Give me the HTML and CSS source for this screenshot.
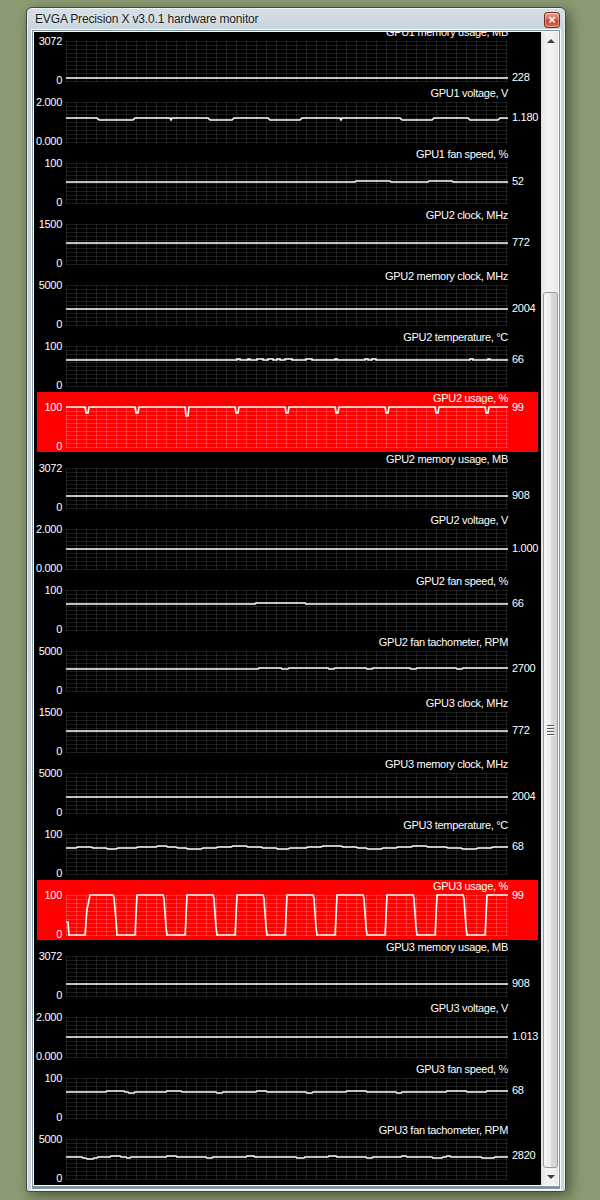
FILE: index.html
```html
<!DOCTYPE html>
<html>
<head>
<meta charset="utf-8">
<title>EVGA Precision X v3.0.1 hardware monitor</title>
<link rel="stylesheet" href="styles.css">
</head>
<body>
<div class="window">
  <div class="titlebar">
    <span class="title-text">EVGA Precision X v3.0.1 hardware monitor</span>
    <span class="close">×</span>
  </div>
  <div class="client"><div class="client-in"><div class="client-core">
    <div class="pane"><div class="strip">

      <div class="panel">
        <div class="title">GPU1 memory usage, MB</div>
        <div class="axis"><span>3072</span><span>0</span></div>
        <svg class="graph" viewBox="0 0 442 41" width="442" height="41"><polyline points="0,37 442,37"/></svg>
        <div class="value" style="margin-top:30px">228</div>
      </div>

      <div class="panel">
        <div class="title">GPU1 voltage, V</div>
        <div class="axis"><span>2.000</span><span>0.000</span></div>
        <svg class="graph" viewBox="0 0 442 41" width="442" height="41"><polyline points="0,16 31,16 33,18 67,18 69,16 104,16 105,18 106,16 142,16 144,18 166,18 168,16 202,16 204,18 234,18 236,16 274,16 275,18 276,16 334,16 336,18 366,18 368,16 402,16 404,18 432,18 434,16 442,16"/></svg>
        <div class="value" style="margin-top:9px">1.180</div>
      </div>

      <div class="panel">
        <div class="title">GPU1 fan speed, %</div>
        <div class="axis"><span>100</span><span>0</span></div>
        <svg class="graph" viewBox="0 0 442 41" width="442" height="41"><polyline points="0,19 289,19 290,18 324,18 325,19 362,19 363,18 386,18 387,19 442,19"/></svg>
        <div class="value" style="margin-top:12px">52</div>
      </div>

      <div class="panel">
        <div class="title">GPU2 clock, MHz</div>
        <div class="axis"><span>1500</span><span>0</span></div>
        <svg class="graph" viewBox="0 0 442 41" width="442" height="41"><polyline points="0,19 442,19"/></svg>
        <div class="value" style="margin-top:12px">772</div>
      </div>

      <div class="panel">
        <div class="title">GPU2 memory clock, MHz</div>
        <div class="axis"><span>5000</span><span>0</span></div>
        <svg class="graph" viewBox="0 0 442 41" width="442" height="41"><polyline points="0,24 442,24"/></svg>
        <div class="value" style="margin-top:17px">2004</div>
      </div>

      <div class="panel">
        <div class="title">GPU2 temperature, °C</div>
        <div class="axis"><span>100</span><span>0</span></div>
        <svg class="graph" viewBox="0 0 442 41" width="442" height="41"><polyline points="0,14 171,14 171,13 174,13 174,14 182,14 182,13 184,13 184,14 191,14 191,13 197,13 197,14 202,14 202,13 207,13 207,14 211,14 211,13 214,13 214,14 219,14 219,13 226,13 226,14 240,14 240,13 246,13 246,14 269,14 269,13 271,13 271,14 299,14 299,13 302,13 302,14 306,14 306,13 310,13 310,14 404,14 404,13 407,13 407,14 422,14 422,13 424,13 424,14 442,14"/></svg>
        <div class="value" style="margin-top:7px">66</div>
      </div>

      <div class="panel red">
        <div class="title">GPU2 usage, %</div>
        <div class="axis"><span>100</span><span>0</span></div>
        <svg class="graph" viewBox="0 0 442 41" width="442" height="41"><polyline points="0,0 19,0 20,6 22,6 23,0 69,0 70,6 72,6 73,0 119,0 120,9 122,9 123,0 169,0 170,6 172,6 173,0 219,0 220,6 222,6 223,0 269,0 270,6 272,6 273,0 319,0 320,6 322,6 323,0 369,0 370,6 372,6 373,0 419,0 420,6 422,6 423,0 442,0"/></svg>
        <div class="value" style="margin-top:-6px">99</div>
      </div>

      <div class="panel">
        <div class="title">GPU2 memory usage, MB</div>
        <div class="axis"><span>3072</span><span>0</span></div>
        <svg class="graph" viewBox="0 0 442 41" width="442" height="41"><polyline points="0,28 442,28"/></svg>
        <div class="value" style="margin-top:21px">908</div>
      </div>

      <div class="panel">
        <div class="title">GPU2 voltage, V</div>
        <div class="axis"><span>2.000</span><span>0.000</span></div>
        <svg class="graph" viewBox="0 0 442 41" width="442" height="41"><polyline points="0,20 442,20"/></svg>
        <div class="value" style="margin-top:13px">1.000</div>
      </div>

      <div class="panel">
        <div class="title">GPU2 fan speed, %</div>
        <div class="axis"><span>100</span><span>0</span></div>
        <svg class="graph" viewBox="0 0 442 41" width="442" height="41"><polyline points="0,14 189,14 190,13 239,13 240,14 442,14"/></svg>
        <div class="value" style="margin-top:7px">66</div>
      </div>

      <div class="panel">
        <div class="title">GPU2 fan tachometer, RPM</div>
        <div class="axis"><span>5000</span><span>0</span></div>
        <svg class="graph" viewBox="0 0 442 41" width="442" height="41"><polyline points="0,18 192,18 193,17 215,17 216,18 222,18 223,17 262,17 263,18 268,18 269,17 300,17 301,18 306,18 307,17 344,17 345,18 350,18 351,17 390,17 391,18 396,18 397,17 442,17"/></svg>
        <div class="value" style="margin-top:11px">2700</div>
      </div>

      <div class="panel">
        <div class="title">GPU3 clock, MHz</div>
        <div class="axis"><span>1500</span><span>0</span></div>
        <svg class="graph" viewBox="0 0 442 41" width="442" height="41"><polyline points="0,19 442,19"/></svg>
        <div class="value" style="margin-top:12px">772</div>
      </div>

      <div class="panel">
        <div class="title">GPU3 memory clock, MHz</div>
        <div class="axis"><span>5000</span><span>0</span></div>
        <svg class="graph" viewBox="0 0 442 41" width="442" height="41"><polyline points="0,24 442,24"/></svg>
        <div class="value" style="margin-top:17px">2004</div>
      </div>

      <div class="panel">
        <div class="title">GPU3 temperature, °C</div>
        <div class="axis"><span>100</span><span>0</span></div>
        <svg class="graph" viewBox="0 0 442 41" width="442" height="41"><polyline points="0,14 10,14 12,13 25,13 27,14 40,14 42,15 50,15 52,14 70,14 72,13 90,13 92,12 100,12 102,13 110,13 112,14 120,14 122,15 135,15 137,14 150,14 152,13 165,13 167,12 180,12 182,13 195,13 197,14 210,14 212,15 222,15 224,14 240,14 242,13 255,13 257,12 275,12 277,13 290,13 292,14 300,14 302,15 315,15 317,14 330,14 332,13 345,13 347,12 360,12 362,13 380,13 382,14 395,14 397,15 410,15 412,14 425,14 427,13 442,13"/></svg>
        <div class="value" style="margin-top:6px">68</div>
      </div>

      <div class="panel red">
        <div class="title">GPU3 usage, %</div>
        <div class="axis"><span>100</span><span>0</span></div>
        <svg class="graph" viewBox="0 0 442 41" width="442" height="41"><polyline points="0,27 2,27 3,40 19,40 20,27 21,14 22,10 24,0 47,0 48,3 50,25 51,40 69,40 70,20 71,0 97,0 98,4 100,32 101,40 119,40 120,22 121,0 147,0 148,4 150,32 151,40 169,40 170,22 171,0 197,0 198,4 200,32 201,40 219,40 220,22 221,0 247,0 248,4 250,32 251,40 269,40 270,22 271,0 297,0 298,4 300,32 301,40 319,40 320,22 321,0 347,0 348,4 350,32 351,40 369,40 370,22 371,0 397,0 398,4 400,32 401,40 419,40 420,22 421,0 442,0"/></svg>
        <div class="value" style="margin-top:-6px">99</div>
      </div>

      <div class="panel">
        <div class="title">GPU3 memory usage, MB</div>
        <div class="axis"><span>3072</span><span>0</span></div>
        <svg class="graph" viewBox="0 0 442 41" width="442" height="41"><polyline points="0,28 442,28"/></svg>
        <div class="value" style="margin-top:21px">908</div>
      </div>

      <div class="panel">
        <div class="title">GPU3 voltage, V</div>
        <div class="axis"><span>2.000</span><span>0.000</span></div>
        <svg class="graph" viewBox="0 0 442 41" width="442" height="41"><polyline points="0,20 442,20"/></svg>
        <div class="value" style="margin-top:13px">1.013</div>
      </div>

      <div class="panel">
        <div class="title">GPU3 fan speed, %</div>
        <div class="axis"><span>100</span><span>0</span></div>
        <svg class="graph" viewBox="0 0 442 41" width="442" height="41"><polyline points="0,14 40,14 41,13 58,13 59,14 62,14 63,15 68,15 69,14 100,14 101,13 115,13 116,14 150,14 151,15 156,15 157,14 190,14 191,13 200,13 201,14 240,14 241,15 246,15 247,14 280,14 281,13 300,13 301,14 330,14 331,15 335,15 336,14 380,14 381,13 400,13 401,14 420,14 421,13 442,13"/></svg>
        <div class="value" style="margin-top:6px">68</div>
      </div>

      <div class="panel">
        <div class="title">GPU3 fan tachometer, RPM</div>
        <div class="axis"><span>5000</span><span>0</span></div>
        <svg class="graph" viewBox="0 0 442 41" width="442" height="41"><polyline points="0,18 16,18 17,19 20,19 21,20 27,20 28,19 31,19 32,18 44,18 45,17 54,17 55,18 60,18 61,19 64,19 65,18 100,18 101,17 110,17 111,18 140,18 141,19 146,19 147,18 180,18 181,17 188,17 189,18 230,18 231,19 238,19 239,18 262,18 263,17 270,17 271,18 300,18 301,19 306,19 307,18 335,18 336,17 340,17 341,18 366,18 367,19 376,19 377,18 380,18 381,17 384,17 385,18 415,18 416,19 428,19 429,18 442,18"/></svg>
        <div class="value" style="margin-top:10px">2820</div>
      </div>

    </div></div>
    <div class="scrollbar">
      <div class="sb-btn"><span class="arrow-up"></span></div>
      <div class="sb-track"><div class="thumb"><span class="grip"></span></div></div>
      <div class="sb-btn"><span class="arrow-down"></span></div>
    </div>
  </div></div></div>
</div>
</body>
</html>
```
FILE: styles.css
```css
html, body {
  margin: 0;
  padding: 0;
}
body {
  width: 600px;
  height: 1200px;
  overflow: hidden;
  background: #8c9b72;
  font-family: "Liberation Sans", Arial, sans-serif;
}
.window {
  margin: 7px 0 0 26px;
  width: 540px;
  height: 1185px;
  box-sizing: border-box;
  border: 1px solid #3c494f;
  border-radius: 6px 6px 3px 3px;
  background: linear-gradient(#d6dfe5, #c7d3db 24px, #c9d4dc);
  padding: 0 4px 4px;
  display: flex;
  flex-direction: column;
  box-shadow: 4px 4px 14px rgba(0, 0, 0, 0.45), inset 0 0 0 1px rgba(255, 255, 255, 0.55);
}
.titlebar {
  height: 21px;
  flex: none;
  display: flex;
  align-items: center;
  justify-content: space-between;
  padding-left: 4px;
}
.title-text {
  font-size: 12px;
  letter-spacing: -0.15px;
  color: #1c1c1c;
  text-shadow: 0 0 5px rgba(255, 255, 255, 0.9);
}
.close {
  width: 14px;
  height: 14px;
  margin: 3px 1px 0 0;
  border: 1px solid #6e3328;
  border-radius: 3px;
  background: linear-gradient(#e7a492, #d2614a 50%, #c2412b 51%, #d86d4c);
  color: #fff;
  font-size: 13px;
  font-weight: bold;
  line-height: 13px;
  text-align: center;
  box-shadow: inset 0 0 0 1px rgba(255, 255, 255, 0.35);
}
.client {
  flex: 1;
  display: flex;
  border: 1px solid #fdfdfd;
}
.client-in {
  flex: 1;
  display: flex;
  border: 1px solid #7d95a1;
  border-bottom-width: 3px;
}
.client-core {
  flex: 1;
  display: flex;
  border: 1px solid #ffffff;
}
.pane {
  flex: 1;
  background: #000;
  overflow: hidden;
}
.strip {
  margin-top: -6px;
}
.panel {
  display: grid;
  grid-template-columns: 25px 442px 25px;
  grid-template-rows: 15px 41px 4px;
  column-gap: 4px;
  margin: 0 3px 1px;
  color: #fff;
  font-size: 11px;
  letter-spacing: -0.3px;
  line-height: 12px;
  white-space: nowrap;
  --grid: rgba(255, 255, 255, 0.11);
}
.panel.red {
  background: #ff0000;
  --grid: rgba(255, 255, 255, 0.2);
}
.title {
  grid-column: 2;
  grid-row: 1;
  text-align: right;
}
.axis {
  grid-column: 1;
  grid-row: 2 / 4;
  margin-top: -6px;
  display: flex;
  flex-direction: column;
  justify-content: space-between;
  align-items: flex-end;
}
.graph {
  grid-column: 2;
  grid-row: 2;
  display: block;
  overflow: visible;
  background-image:
    linear-gradient(to right, var(--grid) 1px, transparent 1px),
    linear-gradient(to bottom, var(--grid) 1px, transparent 1px);
  background-size: 10px 41px, 442px 4px;
}
.graph polyline {
  fill: none;
  stroke: #fff;
  stroke-width: 1.6;
}
.value {
  grid-column: 3;
  grid-row: 2 / 4;
  align-self: start;
}
.scrollbar {
  width: 17px;
  flex: none;
  display: flex;
  flex-direction: column;
  background: linear-gradient(to right, #e2e2e2, #f1f1f1 30%, #f1f1f1 70%, #e6e6e6);
}
.sb-btn {
  height: 17px;
  flex: none;
  display: flex;
  align-items: center;
  justify-content: center;
}
.arrow-up {
  width: 0;
  height: 0;
  border-left: 4px solid transparent;
  border-right: 4px solid transparent;
  border-bottom: 4px solid #404040;
  margin-left: 2px;
}
.arrow-down {
  width: 0;
  height: 0;
  border-left: 4px solid transparent;
  border-right: 4px solid transparent;
  border-top: 4px solid #404040;
  margin-left: 2px;
}
.sb-track {
  flex: 1;
  display: flex;
  flex-direction: column;
  justify-content: flex-end;
}
.thumb {
  height: 874px;
  margin: 0 0 0 2px;
  width: 13px;
  border: 1px solid #9a9a9a;
  border-radius: 3px;
  background: linear-gradient(to right, #f6f6f6, #ececec 50%, #dcdcdc 51%, #d2d2d2);
  display: flex;
  align-items: center;
  justify-content: center;
}
.grip {
  width: 7px;
  height: 11px;
  background: repeating-linear-gradient(#555 0 1px, #fbfbfb 1px 2px, transparent 2px 3px);
}
```
